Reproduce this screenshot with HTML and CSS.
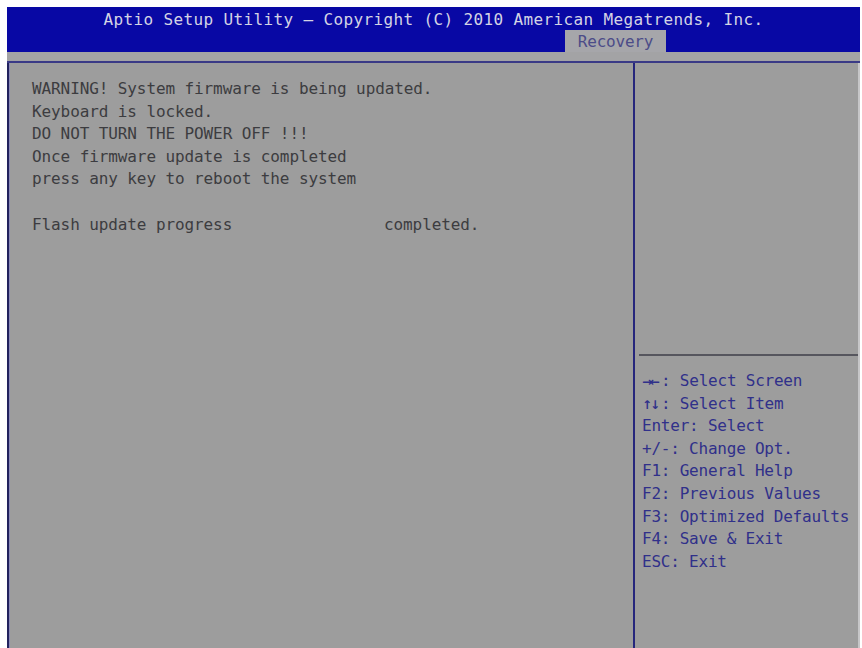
FILE: index.html
```html
<!DOCTYPE html>
<html>
<head>
<meta charset="utf-8">
<link rel="stylesheet" href="styles.css">
</head>
<body>
<div class="screen">
  <header class="top">
    <div class="title">Aptio Setup Utility – Copyright (C) 2010 American Megatrends, Inc.</div>
    <div class="tabs"><span class="tab">Recovery</span></div>
  </header>
  <div class="strip"></div>
  <main class="body">
    <section class="left">
      <div class="line">WARNING! System firmware is being updated.</div>
      <div class="line">Keyboard is locked.</div>
      <div class="line">DO NOT TURN THE POWER OFF !!!</div>
      <div class="line">Once firmware update is completed</div>
      <div class="line">press any key to reboot the system</div>
      <div class="line"></div>
      <div class="line row"><span class="label">Flash update progress</span><span>completed.</span></div>
    </section>
    <aside class="right">
      <div class="desc"></div>
      <div class="help">
        <div class="line"><span class="arrows">→←</span>: Select Screen</div>
        <div class="line"><span class="arrows">↑↓</span>: Select Item</div>
        <div class="line">Enter: Select</div>
        <div class="line">+/-: Change Opt.</div>
        <div class="line">F1: General Help</div>
        <div class="line">F2: Previous Values</div>
        <div class="line">F3: Optimized Defaults</div>
        <div class="line">F4: Save &amp; Exit</div>
        <div class="line">ESC: Exit</div>
      </div>
    </aside>
  </main>
</div>
</body>
</html>
```
FILE: styles.css
```css
html, body {
  margin: 0;
  padding: 0;
  background: #ffffff;
}
.screen {
  margin: 7px 0 0 7px;
  width: 853px;
  height: 641px;
  display: flex;
  flex-direction: column;
  background: #9d9d9d;
  font-family: "DejaVu Sans Mono", "Liberation Mono", monospace;
  font-size: 16px;
}
.top {
  height: 45px;
  background: #0808a4;
  display: flex;
  flex-direction: column;
}
.title {
  height: 20px;
  padding-top: 3px;
  line-height: 20px;
  text-align: center;
  color: #d4d4e4;
  letter-spacing: 0.37px;
}
.tabs {
  margin-top: auto;
  padding-left: 558px;
}
.tab {
  display: block;
  width: 101px;
  height: 22px;
  line-height: 23px;
  background: #a6a6aa;
  color: #4c4c88;
  text-align: center;
  letter-spacing: -0.2px;
}
.strip {
  height: 9px;
  background: #a3a3a5;
  border-bottom: 2px solid #3a3a86;
}
.body {
  flex: 1;
  display: flex;
  border-left: 2px solid #22225e;
}
.left {
  width: 601px;
  padding: 15px 0 0 22px;
  border-left: 1px solid #8c8cb8;
  border-right: 2px solid #26267c;
  color: #3c3c40;
  letter-spacing: -0.1px;
}
.line {
  height: 22.6px;
  line-height: 22.6px;
  white-space: pre;
}
.row {
  display: flex;
}
.label {
  width: 352px;
}
.right {
  flex: 1;
  display: flex;
  flex-direction: column;
  border-right: 2px solid #c6c6c8;
}
.desc {
  height: 291px;
  margin-left: 4px;
  border-bottom: 2px solid #56565e;
}
.help {
  padding: 14px 0 0 7px;
  color: #30308a;
  letter-spacing: -0.22px;
}
.arrows {
  display: inline-block;
  width: 19px;
  font-family: "DejaVu Sans", sans-serif;
  font-weight: bold;
  font-size: 12px;
  letter-spacing: -2px;
}
```
